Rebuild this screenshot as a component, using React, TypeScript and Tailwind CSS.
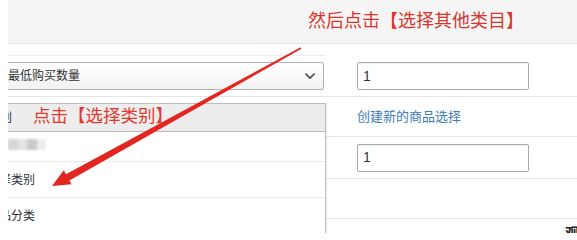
import React from 'react';

const font = { fontFamily: '"Liberation Sans", "Noto Sans CJK SC", sans-serif' };

function Chevron() {
  return (
    <svg width="10" height="7" viewBox="0 0 10 7" fill="none">
      <path d="M1 1.2 L5 5.2 L9 1.2" stroke="#555" strokeWidth="1.8" strokeLinecap="round" strokeLinejoin="round" />
    </svg>
  );
}

function Arrow() {
  return (
    <svg className="absolute inset-0 pointer-events-none" width="577" height="233" viewBox="0 0 577 233">
      <polygon
        points="301.4,48.7 69.4,180.4 71.6,184.3 52,186 63.8,170.3 66,174.2 300.6,47.3"
        fill="#e3261f"
      />
    </svg>
  );
}

export default function App() {
  return (
    <div className="relative flex w-[577px] h-[233px] overflow-hidden bg-white" style={font}>
      <div className="w-[8px] shrink-0 bg-white" />

      <div className="relative flex-1 overflow-hidden flex flex-col">
        {/* header */}
        <div className="h-[44px] shrink-0 bg-[#f5f5f5] border-b border-[#e3e3e3] flex items-center pl-[300px] whitespace-nowrap text-[18px] text-[#d8352d]">
          然后点击【选择其他类目】
        </div>

        {/* row 1 */}
        <div className="h-[53px] shrink-0 flex border-b border-[#e6e6e6]">
          <div className="w-[318px] shrink-0">
            <div className="h-[12px] border-b border-[#ececec]" />
            <div className="mt-[6px] w-[316px] h-[28px] flex items-center justify-between pr-[8px] border border-l-0 border-[#b4b4b4] rounded-r-[3px] bg-linear-to-b from-white to-[#f2f2f2] text-[12px] text-[#333]">
              <span>最低购买数量</span>
              <Chevron />
            </div>
          </div>
          <div className="ml-[31px] mt-[18px]">
            <div className="w-[172px] h-[28px] flex items-center pl-[5px] border border-[#a9a9a9] rounded-[2px] shadow-[inset_0_1px_1px_rgba(0,0,0,0.06)] text-[14px] text-[#333]">
              1
            </div>
          </div>
        </div>

        {/* row 2 */}
        <div className="h-[40px] shrink-0 flex items-center border-b border-[#e6e6e6]">
          <div className="w-[318px] shrink-0" />
          <span className="ml-[31px] text-[13px] text-[#3b7bb6] whitespace-nowrap">创建新的商品选择</span>
        </div>

        {/* row 3 */}
        <div className="h-[42px] shrink-0 flex items-center border-b border-[#e6e6e6]">
          <div className="w-[318px] shrink-0" />
          <div className="ml-[31px] w-[172px] h-[28px] flex items-center pl-[5px] border border-[#a9a9a9] rounded-[2px] shadow-[inset_0_1px_1px_rgba(0,0,0,0.06)] text-[14px] text-[#333]">
            1
          </div>
        </div>

        {/* row 4 */}
        <div className="h-[40px] shrink-0 border-b border-[#e6e6e6]" />

        {/* row 5 */}
        <div className="flex-1 flex justify-end pt-[6px]">
          <span className="text-[14px] font-bold text-[#222] leading-[16px] mr-[-2px]">观</span>
        </div>

        {/* dropdown menu */}
        <div className="absolute left-0 top-[103px] bottom-0 w-[318px] flex flex-col bg-white border-t border-r border-[#bdbdbd] shadow-[1px_1px_3px_rgba(0,0,0,0.08)] text-[12px] text-[#333] whitespace-nowrap">
          <div className="h-[28px] shrink-0 flex items-center bg-[#ededed] border-b border-[#bdbdbd]">
            <span className="ml-[-44px]">选择类别</span>
          </div>
          <div className="h-[30px] shrink-0 flex items-start pt-[7px] border-b border-[#ebebeb]">
            <div className="flex blur-[1px]">
              <div className="w-[10px] h-[11px] bg-[#d6d6d6]" />
              <div className="w-[9px] h-[11px] bg-[#e3e3e3]" />
              <div className="w-[10px] h-[11px] bg-[#cacaca]" />
              <div className="w-[9px] h-[11px] bg-[#ececec]" />
            </div>
          </div>
          <div className="h-[36px] shrink-0 flex items-center border-b border-[#ebebeb]">
            <span className="ml-[-21px]">选择类别</span>
          </div>
          <div className="h-[36px] shrink-0 flex items-center">
            <span className="ml-[-21px]">商品分类</span>
          </div>
        </div>

        {/* annotation */}
        <span className="absolute left-[25px] top-[106px] leading-[20px] text-[17.5px] text-[#de3a30] whitespace-nowrap">
          点击【选择类别】
        </span>
      </div>

      <Arrow />
    </div>
  );
}
